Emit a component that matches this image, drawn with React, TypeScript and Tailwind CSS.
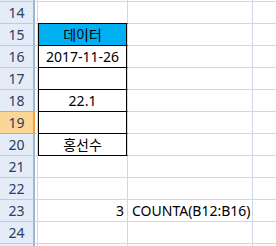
import clsx from 'clsx';

const ROWS = [14, 15, 16, 17, 18, 19, 20, 21, 22, 23, 24];

const colB: Record<number, string> = {
    15: '데이터',
    16: '2017-11-26',
    18: '22.1',
    20: '홍선수',
};

function Row({ n }: { n: number }) {
    const boxed = n >= 15 && n <= 20;
    const blackBottom = n >= 14 && n <= 20;
    const selected = n === 19;
    const orangeBottom = n === 18 || n === 19;

    return (
        <div className="flex h-[22px]">
            <div
                className={clsx(
                    'w-[35px] shrink-0 flex items-center justify-center border-r-2 border-b text-[#27415f]',
                    selected ? 'bg-[#fcd696] border-r-[#f2a23c]' : 'bg-[#e4ecf7] border-r-[#9eb6ce]',
                    orangeBottom ? 'border-b-[#f2a23c]' : 'border-b-[#bccde0]'
                )}
            >
                {n}
            </div>
            <div className="w-[3px] shrink-0 border-r border-b border-[#d0d7e5]" />
            <div
                className={clsx(
                    'w-[90px] shrink-0 flex border-r border-r-[#d0d7e5] border-b',
                    blackBottom ? 'border-b-black' : 'border-b-[#d0d7e5]'
                )}
            >
                <div
                    className={clsx(
                        'flex-1 flex items-center',
                        boxed && 'border-l border-r border-black',
                        n === 15 && 'bg-[#00b0f0]',
                        n === 23 ? 'justify-end pr-[3px]' : 'justify-center'
                    )}
                >
                    {n === 23 ? '3' : colB[n]}
                </div>
            </div>
            <div className="w-[125px] shrink-0 flex items-center border-r border-b border-[#d0d7e5] pl-[4px] whitespace-nowrap relative z-10">
                {n === 23 ? 'COUNTA(B12:B16)' : null}
            </div>
            <div className="flex-1 border-b border-[#d0d7e5]" />
        </div>
    );
}

export default function App() {
    return (
        <div
            className="w-[276px] h-[246px] overflow-hidden bg-white text-black text-[14px] leading-none"
            style={{ fontFamily: '"Noto Sans", "Noto Sans CJK KR", sans-serif' }}
        >
            <div className="flex h-[2px]">
                <div className="w-[35px] shrink-0 bg-[#e4ecf7] border-r-2 border-r-[#9eb6ce] border-b border-b-[#bccde0]" />
                <div className="w-[3px] shrink-0 border-r border-b border-[#d0d7e5]" />
                <div className="w-[90px] shrink-0 border-r border-b border-[#d0d7e5]" />
                <div className="w-[125px] shrink-0 border-r border-b border-[#d0d7e5]" />
                <div className="flex-1 border-b border-[#d0d7e5]" />
            </div>
            {ROWS.map(n => (
                <Row key={n} n={n} />
            ))}
            <div className="flex h-[2px]">
                <div className="w-[35px] shrink-0 bg-[#e4ecf7] border-r-2 border-r-[#9eb6ce]" />
                <div className="w-[3px] shrink-0 border-r border-[#d0d7e5]" />
                <div className="w-[90px] shrink-0 border-r border-[#d0d7e5]" />
                <div className="w-[125px] shrink-0 border-r border-[#d0d7e5]" />
            </div>
        </div>
    );
}
